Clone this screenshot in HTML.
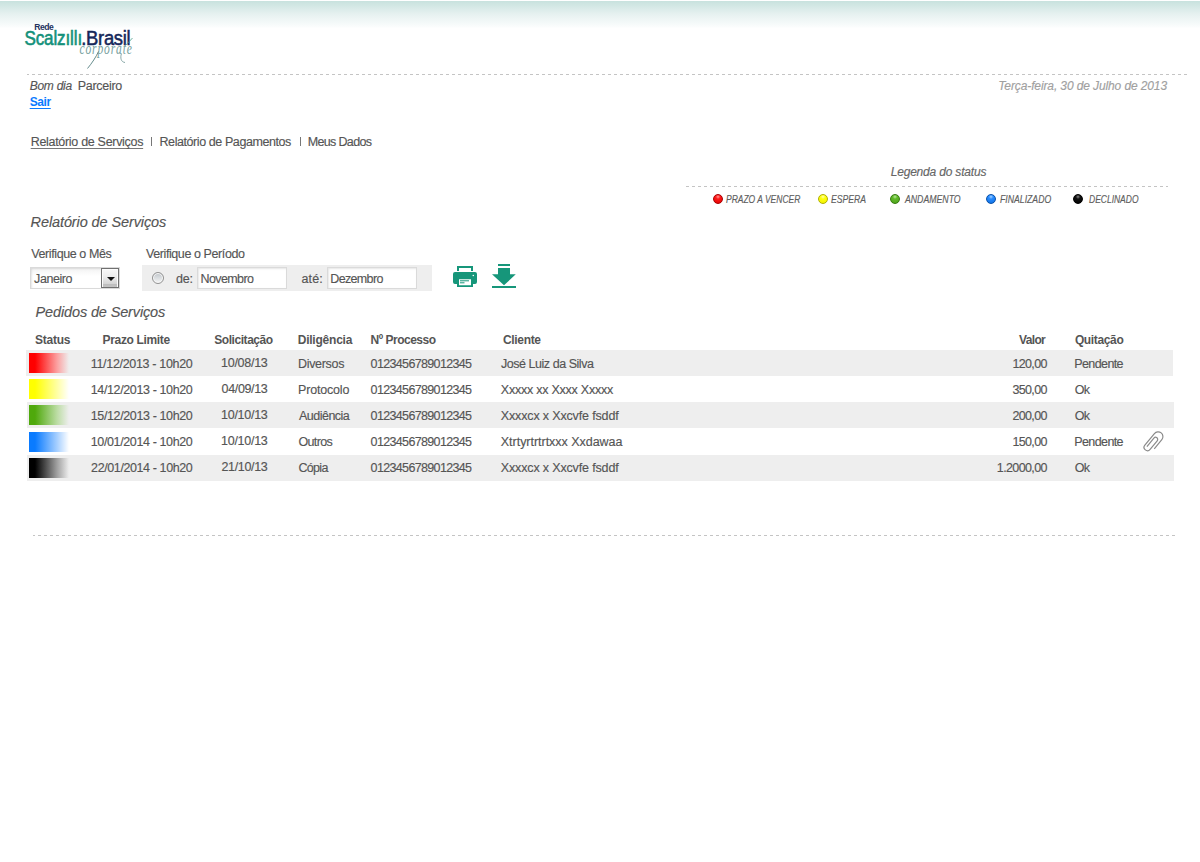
<!DOCTYPE html>
<html><head><meta charset="utf-8">
<style>
html,body{margin:0;padding:0;background:#fff;width:1200px;height:862px;overflow:hidden;}
body{position:relative;font-family:"Liberation Sans",sans-serif;font-size:12px;color:#555;}
.rr{font-size:12.5px;-webkit-text-stroke-width:0.15px;}
.a{position:absolute;white-space:nowrap;line-height:14px;}
.topgrad{position:absolute;left:0;top:0;width:1200px;height:28px;background:linear-gradient(#fff 0,#fff 1px,#c8e2de 1px,#e6f1f0 14px,#fbfdfd 27px,#fff 28px);}
.dash{position:absolute;height:1px;background:repeating-linear-gradient(90deg,#c4c4c4 0,#c4c4c4 3px,transparent 3px,transparent 6px);}
.b{font-weight:bold;}
.i{font-style:italic;-webkit-text-stroke-width:0.15px;}
.leg{position:absolute;font-style:italic;font-size:10px;line-height:12px;color:#5e5e5e;-webkit-text-stroke-width:0.15px;white-space:nowrap;transform-origin:0 0;}
.dot{position:absolute;width:10px;height:10px;border-radius:50%;box-sizing:border-box;}
.row{position:absolute;left:27px;width:1147px;height:26px;background:#eee;}
.bar{position:absolute;left:29px;width:40px;height:20px;}
.inp{position:absolute;box-sizing:border-box;height:22px;border:1px solid #dadada;box-shadow:inset 1px 1px 2px rgba(0,0,0,0.10);background:#fff;}
.sep{position:absolute;width:1px;height:9px;background:#777;top:137px;}
</style></head><body>
<div class="topgrad"></div>
<svg style="position:absolute;left:0;top:0;" width="160" height="75" viewBox="0 0 160 75">
 <text x="34.3" y="30" font-family="Liberation Sans" font-weight="bold" font-size="8.6" fill="#22335e" letter-spacing="-0.55">Rede</text>
 <text x="0" y="0" font-family="Liberation Sans" font-size="19.5" fill="#13917a" stroke="#13917a" stroke-width="0.6" letter-spacing="-0.15" transform="translate(24.4 44.6) scale(0.875 1.04)">Scalzıllı</text>
 <text x="0" y="0" font-family="Liberation Sans" font-size="19.5" fill="#15275a" stroke="#15275a" stroke-width="0.5" letter-spacing="-0.3" transform="translate(81.2 44.6) scale(0.945 1.04)">.Brasil</text>
 <text x="0" y="0" font-family="Liberation Serif" font-style="italic" font-size="16" fill="#76a09e" letter-spacing="1.2" transform="translate(79.5 54) scale(0.72 1)">corporate</text>
 <path d="M98.5 51.5 C96 57 92 63 87.5 68.5" fill="none" stroke="#557f80" stroke-width="0.9"/>
 <path d="M121.5 53.5 C120 58 121 62 125 62.5" fill="none" stroke="#6a9090" stroke-width="0.8"/>
 <path d="M125.5 45.5 L132.5 38" fill="none" stroke="#4a9a88" stroke-width="0.8"/>
</svg>
<div class="dash" style="left:27px;top:74px;width:1160px;background-position:-1px 0;"></div>
<div class="sep" style="left:151px;"></div>
<div class="sep" style="left:299.5px;"></div>
<div class="dash" style="left:686px;top:186px;width:482px;"></div>
<div class="dot" style="left:713px;top:194px;background:radial-gradient(circle at 50% 22%,#ff9a9a 0,#ff1a1a 30%,#e00000 100%);border:1px solid #a80000;"></div>
<div class="dot" style="left:818px;top:194px;background:radial-gradient(circle at 50% 22%,#ffffb8 0,#ffff10 30%,#f0f000 100%);border:1px solid #b0b000;"></div>
<div class="dot" style="left:890px;top:194px;background:radial-gradient(circle at 50% 22%,#b8e8a0 0,#62ba2a 30%,#4aa018 100%);border:1px solid #367a10;"></div>
<div class="dot" style="left:986px;top:194px;background:radial-gradient(circle at 50% 22%,#a8d4ff 0,#2a8cff 30%,#0a6ee0 100%);border:1px solid #0850a8;"></div>
<div class="dot" style="left:1073px;top:194px;background:radial-gradient(circle at 50% 22%,#888 0,#111 30%,#000 100%);border:1px solid #000;"></div>
<div class="inp" style="left:30px;top:267px;width:90px;background:linear-gradient(#f2f2f2,#fff 40%);"></div>
<div style="position:absolute;box-sizing:border-box;left:101px;top:268px;width:18px;height:20px;border:1px solid #707070;box-shadow:inset 1px 1px 0 #fcfcfc,inset -1px 0 0 #fcfcfc;background:linear-gradient(#f8f8f8 0,#ececec 45%,#d4d4d4 82%,#bdbdbd 84%,#c4c4c4 100%);"></div>
<div style="position:absolute;left:106.5px;top:277px;width:0;height:0;border-left:4px solid transparent;border-right:4px solid transparent;border-top:4.5px solid #111;"></div>
<div style="position:absolute;left:142px;top:265px;width:290px;height:26px;background:#eee;"></div>
<div style="position:absolute;box-sizing:border-box;left:152px;top:272px;width:12px;height:12px;border-radius:50%;border:1px solid #929292;box-shadow:inset 0 0 0 1px #fafafa;background:linear-gradient(#bfc4c8 0,#d8dcdf 45%,#f6f6f6 100%);"></div>
<div class="inp" style="left:197px;top:267px;width:90px;"></div>
<div class="inp" style="left:327px;top:267px;width:90px;"></div>
<svg style="position:absolute;left:445px;top:258px;" width="80" height="40" viewBox="0 0 80 40">
 <g fill="#16967a">
  <path d="M12 8 H28 V13 H26 V10 H14 V13 H12 Z"/>
  <path d="M10 14 H30 Q32 14 32 16 V24 Q32 26 30 26 H28 V29 H12 V26 H10 Q8 26 8 24 V16 Q8 14 10 14 Z M14 21.3 V27.3 H26 V21.3 Z"/>
  <rect x="15" y="22.3" width="9" height="1"/>
  <rect x="15" y="24.3" width="4.5" height="1"/>
  <path d="M53 6 H65 V8 H53 Z"/>
  <path d="M53 10 H65 V16.3 H70.8 L59 27.2 L47 16.3 H53 Z"/>
  <rect x="47" y="28" width="24" height="2"/>
 </g>
 <circle cx="28.3" cy="17.5" r="0.8" fill="#fff"/>
</svg>
<div class="row" style="top:350px;left:26px;"></div>
<div class="bar" style="top:353px;background:linear-gradient(90deg,#ff0000 0,#ff0000 15%,rgba(255,140,140,0.8) 70%,rgba(255,255,255,0) 100%);"></div>
<div class="bar" style="top:379px;background:linear-gradient(90deg,#ffff00 0,#ffff00 15%,rgba(255,255,140,0.8) 70%,rgba(255,255,255,0) 100%);"></div>
<div class="row" style="top:402px;"></div>
<div class="bar" style="top:405px;background:linear-gradient(90deg,#4fa90c 0,#4fa90c 15%,rgba(175,216,145,0.8) 70%,rgba(255,255,255,0) 100%);"></div>
<div class="bar" style="top:432px;background:linear-gradient(90deg,#0a7bff 0,#0a7bff 15%,rgba(144,195,255,0.8) 70%,rgba(255,255,255,0) 100%);"></div>
<div class="row" style="top:455px;"></div>
<div class="bar" style="top:458px;background:linear-gradient(90deg,#000000 0,#000000 15%,rgba(140,140,140,0.8) 70%,rgba(255,255,255,0) 100%);"></div>
<svg style="position:absolute;left:1135px;top:425px;" width="40" height="32" viewBox="0 0 40 32">
 <path transform="matrix(0.771 0.637 -0.637 0.771 22.54 4.75)" d="M9.6,16.8 V4.9 A4.8,4.8 0 0 0 0,4.9 V19.9 A3.4,3.4 0 0 0 6.8,19.9 V8.75 A2.15,2.15 0 0 0 2.5,8.75 V19.7" fill="none" stroke="#8a8a8a" stroke-width="1.2"/>
</svg>
<div class="dash" style="left:33px;top:535px;width:1142px;background-position:-1px 0;"></div>
<div class="a i" style="left:29.70px;top:79px;letter-spacing:-0.258px;">Bom dia</div>
<div class="a rr" style="left:77.70px;top:79px;letter-spacing:-0.285px;">Parceiro</div>
<div class="a b" style="left:29.70px;top:95px;letter-spacing:-0.404px;color:#0a7bff;text-decoration:underline;text-underline-offset:2px;text-decoration-skip-ink:none;">Sair</div>
<div class="a i" style="left:998.25px;top:79px;letter-spacing:-0.113px;color:#a0a0a0;">Terça-feira, 30 de Julho de 2013</div>
<div class="a rr" style="left:30.70px;top:135px;letter-spacing:-0.303px;text-decoration:underline;text-underline-offset:1.5px;text-decoration-skip-ink:none;text-decoration-color:#777;">Relatório de Serviços</div>
<div class="a rr" style="left:159.50px;top:135px;letter-spacing:-0.419px;">Relatório de Pagamentos</div>
<div class="a rr" style="left:307.70px;top:135px;letter-spacing:-0.650px;">Meus Dados</div>
<div class="a i" style="left:890.70px;top:165px;letter-spacing:-0.191px;color:#666;">Legenda do status</div>
<div class="leg" style="left:726.45px;top:194px;transform:scaleX(0.8482);">PRAZO A VENCER</div>
<div class="leg" style="left:831.44px;top:194px;transform:scaleX(0.8618);">ESPERA</div>
<div class="leg" style="left:904.84px;top:194px;transform:scaleX(0.8728);">ANDAMENTO</div>
<div class="leg" style="left:1000.44px;top:194px;transform:scaleX(0.8694);">FINALIZADO</div>
<div class="leg" style="left:1088.75px;top:194px;transform:scaleX(0.8482);">DECLINADO</div>
<div class="a i" style="left:30.60px;top:214px;font-size:14.5px;line-height:17px;letter-spacing:-0.108px;">Relatório de Serviços</div>
<div class="a rr" style="left:31.30px;top:247px;letter-spacing:-0.408px;">Verifique o Mês</div>
<div class="a rr" style="left:146.00px;top:247px;letter-spacing:-0.410px;">Verifique o Período</div>
<div class="a rr" style="left:34.10px;top:272px;letter-spacing:-0.441px;">Janeiro</div>
<div class="a rr" style="left:175.90px;top:272px;letter-spacing:-0.202px;">de:</div>
<div class="a rr" style="left:200.50px;top:272px;letter-spacing:-0.601px;">Novembro</div>
<div class="a rr" style="left:301.50px;top:272px;letter-spacing:0.141px;">até:</div>
<div class="a rr" style="left:330.25px;top:272px;letter-spacing:-0.650px;">Dezembro</div>
<div class="a i" style="left:35.60px;top:304px;font-size:14.5px;line-height:17px;letter-spacing:-0.141px;">Pedidos de Serviços</div>
<div class="a b" style="left:35.10px;top:333px;letter-spacing:-0.280px;">Status</div>
<div class="a b" style="left:102.60px;top:333px;letter-spacing:-0.352px;">Prazo Limite</div>
<div class="a b" style="left:214.30px;top:333px;letter-spacing:-0.453px;">Solicitação</div>
<div class="a b" style="left:297.70px;top:333px;letter-spacing:-0.223px;">Diligência</div>
<div class="a b" style="left:370.60px;top:333px;letter-spacing:-0.498px;">Nº Processo</div>
<div class="a b" style="left:503.00px;top:333px;letter-spacing:-0.339px;">Cliente</div>
<div class="a b" style="left:1019.00px;top:333px;letter-spacing:-0.650px;">Valor</div>
<div class="a b" style="left:1074.90px;top:333px;letter-spacing:-0.359px;">Quitação</div>
<div class="a rr" style="left:90.80px;top:357px;letter-spacing:-0.326px;">11/12/2013 - 10h20</div>
<div class="a rr" style="left:221.10px;top:356px;letter-spacing:-0.286px;">10/08/13</div>
<div class="a rr" style="left:298.00px;top:357px;letter-spacing:-0.310px;">Diversos</div>
<div class="a rr" style="left:370.60px;top:357px;letter-spacing:-0.650px;">0123456789012345</div>
<div class="a rr" style="left:500.90px;top:357px;letter-spacing:-0.453px;">José Luiz da Silva</div>
<div class="a rr" style="left:1012.40px;top:357px;letter-spacing:-0.636px;">120,00</div>
<div class="a rr" style="left:1074.30px;top:357px;letter-spacing:-0.610px;">Pendente</div>
<div class="a rr" style="left:90.80px;top:383px;letter-spacing:-0.381px;">14/12/2013 - 10h20</div>
<div class="a rr" style="left:221.60px;top:382px;letter-spacing:-0.358px;">04/09/13</div>
<div class="a rr" style="left:298.00px;top:383px;letter-spacing:-0.182px;">Protocolo</div>
<div class="a rr" style="left:370.60px;top:383px;letter-spacing:-0.650px;">0123456789012345</div>
<div class="a rr" style="left:500.80px;top:383px;letter-spacing:-0.235px;">Xxxxx xx Xxxx Xxxxx</div>
<div class="a rr" style="left:1012.47px;top:383px;letter-spacing:-0.650px;">350,00</div>
<div class="a rr" style="left:1074.80px;top:383px;letter-spacing:-0.650px;">Ok</div>
<div class="a rr" style="left:90.80px;top:409px;letter-spacing:-0.381px;">15/12/2013 - 10h20</div>
<div class="a rr" style="left:221.10px;top:408px;letter-spacing:-0.286px;">10/10/13</div>
<div class="a rr" style="left:299.00px;top:409px;letter-spacing:-0.519px;">Audiência</div>
<div class="a rr" style="left:370.60px;top:409px;letter-spacing:-0.650px;">0123456789012345</div>
<div class="a rr" style="left:500.80px;top:409px;letter-spacing:-0.150px;">Xxxxcx x Xxcvfe fsddf</div>
<div class="a rr" style="left:1012.47px;top:409px;letter-spacing:-0.650px;">200,00</div>
<div class="a rr" style="left:1074.80px;top:409px;letter-spacing:-0.650px;">Ok</div>
<div class="a rr" style="left:90.80px;top:435px;letter-spacing:-0.381px;">10/01/2014 - 10h20</div>
<div class="a rr" style="left:221.10px;top:434px;letter-spacing:-0.286px;">10/10/13</div>
<div class="a rr" style="left:298.50px;top:435px;letter-spacing:-0.650px;">Outros</div>
<div class="a rr" style="left:370.60px;top:435px;letter-spacing:-0.650px;">0123456789012345</div>
<div class="a rr" style="left:500.80px;top:435px;letter-spacing:-0.028px;">Xtrtyrtrtrtxxx Xxdawaa</div>
<div class="a rr" style="left:1012.40px;top:435px;letter-spacing:-0.636px;">150,00</div>
<div class="a rr" style="left:1074.30px;top:435px;letter-spacing:-0.610px;">Pendente</div>
<div class="a rr" style="left:91.10px;top:461px;letter-spacing:-0.399px;">22/01/2014 - 10h20</div>
<div class="a rr" style="left:221.40px;top:460px;letter-spacing:-0.329px;">21/10/13</div>
<div class="a rr" style="left:298.40px;top:461px;letter-spacing:-0.650px;">Cópia</div>
<div class="a rr" style="left:370.60px;top:461px;letter-spacing:-0.650px;">0123456789012345</div>
<div class="a rr" style="left:500.80px;top:461px;letter-spacing:-0.150px;">Xxxxcx x Xxcvfe fsddf</div>
<div class="a rr" style="left:996.85px;top:461px;letter-spacing:-0.626px;">1.2000,00</div>
<div class="a rr" style="left:1074.80px;top:461px;letter-spacing:-0.650px;">Ok</div>
</body></html>
